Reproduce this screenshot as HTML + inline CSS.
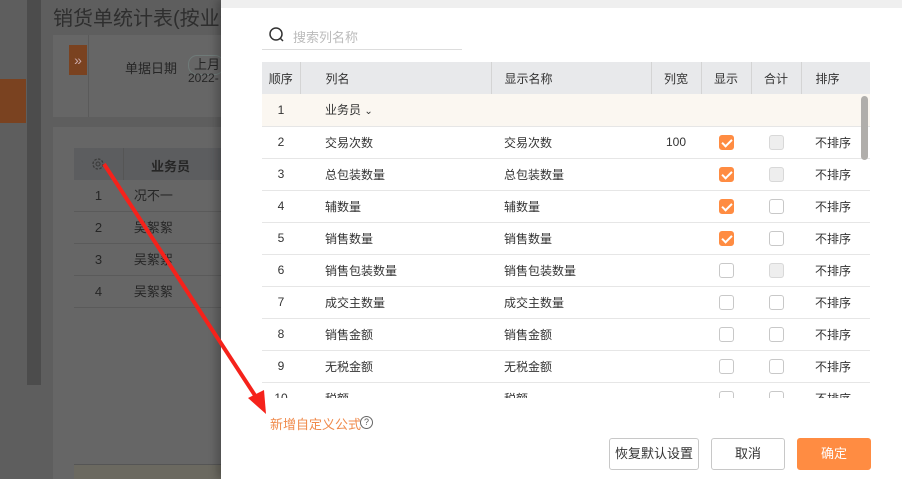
<!DOCTYPE html>
<html><head><meta charset="utf-8"><style>
*{margin:0;padding:0;box-sizing:border-box}
body{width:902px;height:479px;overflow:hidden;position:relative;background:#5e5e5e;font-family:"Liberation Sans","Noto Sans CJK SC",sans-serif;font-size:12px;color:#333}
.a{position:absolute}
table{border-collapse:collapse;table-layout:fixed}
.m td,.m th{height:32px;font-size:12px;color:#333;text-align:left;padding-left:0;white-space:nowrap}
.m th{background:#e8e9eb;font-weight:normal;border-right:1px solid #d4d4d4}
.m td{border-bottom:1px solid #e6e6e6;background:#fff}
.cb{display:inline-block;width:15px;height:15px;border:1px solid #c8c8c8;border-radius:3px;background:#fff;vertical-align:middle}
.cb.on{background:#ff8c42;border-color:#ff8c42;position:relative}
.cb.on:after{content:"";position:absolute;left:4px;top:1px;width:4px;height:8px;border:solid #fff;border-width:0 2px 2px 0;transform:rotate(45deg)}
.cb.dis{background:#eee;border-color:#d8d8d8}
.btn{position:absolute;height:32px;border:1px solid #c8c8c8;border-radius:3px;background:#fff;text-align:center;line-height:30px;font-size:13px;color:#333}
.p1{padding-left:25px!important}.p2{padding-left:13px!important}.p3{padding-left:14px!important}
</style></head><body>
<div class="a" style="left:0;top:79px;width:26px;height:44px;background:#7a4220"></div>
<div class="a" style="left:27px;top:0;width:14px;height:385px;background:#4c4c4c"></div>
<div class="a" style="left:53px;top:2px;font-size:20px;color:#2e2e2e;white-space:nowrap">销货单统计表(按业务</div>
<div class="a" style="left:53px;top:35px;width:180px;height:82px;background:#666"></div>
<div class="a" style="left:88px;top:35px;width:1px;height:82px;background:#5a5a5a"></div>
<div class="a" style="left:69px;top:45px;width:18px;height:30px;background:#7a4220;color:#caa;text-align:center;line-height:30px;font-size:14px">»</div>
<div class="a" style="left:125px;top:58px;color:#262626;font-size:13px;white-space:nowrap">单据日期</div>
<div class="a" style="left:188px;top:55px;width:36px;height:20px;border:1px solid #6f7a78;border-radius:9px;color:#262626;font-size:13px;padding-left:5px;white-space:nowrap;line-height:18px">上月</div>
<div class="a" style="left:188px;top:71px;color:#262626">2022-</div>
<div class="a" style="left:53px;top:127px;width:180px;height:352px;background:#666"></div>
<div class="a" style="left:74px;top:148px;width:160px;height:32px;background:#5c5d5f"></div>
<div class="a" style="left:123px;top:148px;width:1px;height:32px;background:#555"></div>
<svg class="a" style="left:91px;top:157px" width="14" height="14" viewBox="0 0 14 14"><circle cx="7" cy="7" r="5" fill="none" stroke="#3a3a3a" stroke-width="1.3" stroke-dasharray="2.5 1.4"/><circle cx="7" cy="7" r="2" fill="none" stroke="#3a3a3a"/></svg>
<div class="a" style="left:151px;top:156px;font-weight:bold;color:#262626;font-size:13px">业务员</div>
<div class="a" style="left:74px;top:180px;width:160px;font-size:13px;color:#262626">
<div style="height:32px;border-bottom:1px solid #5a5a5a;line-height:32px"><span style="display:inline-block;width:49px;text-align:center">1</span>&nbsp;&nbsp;&nbsp;况不一</div>
<div style="height:32px;border-bottom:1px solid #5a5a5a;line-height:32px"><span style="display:inline-block;width:49px;text-align:center">2</span>&nbsp;&nbsp;&nbsp;吴絮絮</div>
<div style="height:32px;border-bottom:1px solid #5a5a5a;line-height:32px"><span style="display:inline-block;width:49px;text-align:center">3</span>&nbsp;&nbsp;&nbsp;吴絮絮</div>
<div style="height:32px;border-bottom:1px solid #5a5a5a;line-height:32px"><span style="display:inline-block;width:49px;text-align:center">4</span>&nbsp;&nbsp;&nbsp;吴絮絮</div>
</div>
<div class="a" style="left:74px;top:464px;width:160px;height:15px;background:#6b6960;border-top:1px solid #555"></div>

<div class="a" style="left:221px;top:0;width:681px;height:479px;background:#fff;box-shadow:-4px 0 8px rgba(0,0,0,.25)"></div>
<div class="a" style="left:221px;top:0;width:681px;height:8px;background:#efefef"></div>
<svg class="a" style="left:268px;top:26px" width="18" height="18" viewBox="0 0 18 18"><circle cx="8" cy="8" r="6" fill="none" stroke="#333" stroke-width="1.5"/><line x1="12.5" y1="12.5" x2="15" y2="15" stroke="#333" stroke-width="1.5"/></svg>
<div class="a" style="left:293px;top:27px;color:#bbb;font-size:13px">搜索列名称</div>
<div class="a" style="left:262px;top:49px;width:200px;height:1px;background:#ddd"></div>

<div class="a" style="left:262px;top:62px;width:608px;height:336px;overflow:hidden">
<table class="m" style="width:608px">
<colgroup><col style="width:38px"><col style="width:191px"><col style="width:160px"><col style="width:50px"><col style="width:50px"><col style="width:50px"><col style="width:69px"></colgroup>
<tr><th style="text-align:center">顺序</th><th class="p1">列名</th><th class="p2">显示名称</th><th style="text-align:center">列宽</th><th style="text-align:center">显示</th><th style="text-align:center">合计</th><th class="p3" style="border-right:0">排序</th></tr>
<tr><td style="text-align:center;background:#fbf7f1">1</td><td class="p1" style="background:#fbf7f1">业务员 <span style="font-size:10px">&#8964;</span></td><td style="background:#fbf7f1"></td><td style="background:#fbf7f1"></td><td style="background:#fbf7f1"></td><td style="background:#fbf7f1"></td><td style="background:#fbf7f1"></td></tr>
<tr><td style="text-align:center">2</td><td class="p1">交易次数</td><td class="p2">交易次数</td><td style="text-align:center">100</td><td style="text-align:center"><span class="cb on"></span></td><td style="text-align:center"><span class="cb dis"></span></td><td class="p3">不排序</td></tr>
<tr><td style="text-align:center">3</td><td class="p1">总包装数量</td><td class="p2">总包装数量</td><td></td><td style="text-align:center"><span class="cb on"></span></td><td style="text-align:center"><span class="cb dis"></span></td><td class="p3">不排序</td></tr>
<tr><td style="text-align:center">4</td><td class="p1">辅数量</td><td class="p2">辅数量</td><td></td><td style="text-align:center"><span class="cb on"></span></td><td style="text-align:center"><span class="cb"></span></td><td class="p3">不排序</td></tr>
<tr><td style="text-align:center">5</td><td class="p1">销售数量</td><td class="p2">销售数量</td><td></td><td style="text-align:center"><span class="cb on"></span></td><td style="text-align:center"><span class="cb"></span></td><td class="p3">不排序</td></tr>
<tr><td style="text-align:center">6</td><td class="p1">销售包装数量</td><td class="p2">销售包装数量</td><td></td><td style="text-align:center"><span class="cb"></span></td><td style="text-align:center"><span class="cb dis"></span></td><td class="p3">不排序</td></tr>
<tr><td style="text-align:center">7</td><td class="p1">成交主数量</td><td class="p2">成交主数量</td><td></td><td style="text-align:center"><span class="cb"></span></td><td style="text-align:center"><span class="cb"></span></td><td class="p3">不排序</td></tr>
<tr><td style="text-align:center">8</td><td class="p1">销售金额</td><td class="p2">销售金额</td><td></td><td style="text-align:center"><span class="cb"></span></td><td style="text-align:center"><span class="cb"></span></td><td class="p3">不排序</td></tr>
<tr><td style="text-align:center">9</td><td class="p1">无税金额</td><td class="p2">无税金额</td><td></td><td style="text-align:center"><span class="cb"></span></td><td style="text-align:center"><span class="cb"></span></td><td class="p3">不排序</td></tr>
<tr><td style="text-align:center">10</td><td class="p1">税额</td><td class="p2">税额</td><td></td><td style="text-align:center"><span class="cb"></span></td><td style="text-align:center"><span class="cb"></span></td><td class="p3">不排序</td></tr>
</table>
<div class="a" style="left:599px;top:34px;width:7px;height:64px;background:#b0aeab;border-radius:4px"></div>
</div>

<div class="a" style="left:270px;top:414px;color:#f08a4b;font-size:13px">新增自定义公式</div>
<div class="a" style="left:360px;top:416px;width:13px;height:13px;border:1px solid #666;border-radius:50%;font-size:9px;line-height:11px;text-align:center;color:#555">?</div>
<div class="btn" style="left:609px;top:438px;width:90px">恢复默认设置</div>
<div class="btn" style="left:711px;top:438px;width:74px">取消</div>
<div class="btn" style="left:797px;top:438px;width:74px;background:#ff8c42;border-color:#ff8c42;color:#fff">确定</div>

<svg class="a" style="left:0;top:0" width="902" height="479"><line x1="104" y1="164" x2="258" y2="400" stroke="#f5221b" stroke-width="4"/><polygon points="266,414 248,398 264,390" fill="#f5221b"/></svg>
</body></html>
